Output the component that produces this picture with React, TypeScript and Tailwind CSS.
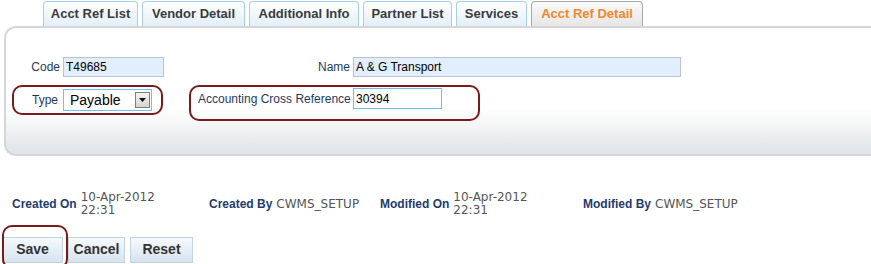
import React from "react";

const tabs = [
  { label: "Acct Ref List", w: 95 },
  { label: "Vendor Detail", w: 103 },
  { label: "Additional Info", w: 110 },
  { label: "Partner List", w: 89 },
  { label: "Services", w: 71 },
  { label: "Acct Ref Detail", w: 112, active: true },
];

function MetaItem({ label, value, width }: { label: string; value: React.ReactNode; width: string }) {
  return (
    <div className={`flex items-center gap-[4px] ${width}`}>
      <span className="whitespace-nowrap text-[12px] font-bold text-[#1f3b6e] font-['Liberation_Sans',Arial,sans-serif]">{label}</span>
      <span className="whitespace-nowrap text-[12px] leading-[13px] text-[#555] font-['DejaVu_Sans',Verdana,sans-serif]">{value}</span>
    </div>
  );
}

export default function App() {
  return (
    <div className="w-[871px] h-[264px] bg-white overflow-hidden font-['Liberation_Sans',Arial,sans-serif]">
      {/* Tabs */}
      <div className="flex items-end gap-[4px] pl-[43px] pt-[1px] h-[26px]">
        {tabs.map((t) => (
          <div
            key={t.label}
            style={{ width: t.w }}
            className={
              t.active
                ? "h-[25px] rounded-t-[4px] border border-b-0 border-[#a8a8a8] bg-gradient-to-b from-[#fafafa] to-[#e6e6e6] flex items-center justify-center text-[13px] font-bold text-[#f0892a]"
                : "h-[25px] rounded-t-[4px] border border-b-0 border-[#a6cfea] bg-gradient-to-b from-white to-[#e2eff9] flex items-center justify-center text-[13px] font-bold text-[#3b3b3b]"
            }
          >
            {t.label}
          </div>
        ))}
      </div>

      {/* Panel */}
      <div className="ml-[4px] h-[130px] border-2 border-r-0 border-[#d6d6d6] rounded-l-[12px] bg-[linear-gradient(to_bottom,#ffffff_0%,#ffffff_64%,#f6f7f8_74%,#dfe3e7_100%)]">
        <div className="pt-[29px]">
          {/* Row 1 */}
          <div className="flex items-center h-[20px]">
            <span className="w-[54px] text-right text-[12px] text-[#1f3b5c]">Code</span>
            <div className="ml-[3px] w-[101px] h-[20px] bg-[#e2eefb] border border-[#b7c5d2] text-[12px] text-black px-[2px] flex items-center">
              T49685
            </div>
            <span className="w-[186px] text-right text-[12px] text-[#1f3b5c]">Name</span>
            <div className="ml-[3px] w-[328px] h-[20px] bg-[#e2eefb] border border-[#b7c5d2] text-[12px] text-black px-[2px] flex items-center">
              A &amp; G Transport
            </div>
          </div>

          {/* Row 2 */}
          <div className="flex items-start mt-[8px]">
            <div className="ml-[6px] w-[151px] h-[30px] border-2 border-[#7b1a1a] rounded-[10px] flex items-center justify-end pr-[9px] gap-[5px]">
              <span className="text-[12px] text-[#1f3b5c]">Type</span>
              <div className="w-[89px] h-[22px] border border-[#74c0ea] bg-white flex items-center justify-between pl-[6px] pr-[1px]">
                <span className="text-[14px] text-black">Payable</span>
                <div className="w-[15px] h-[16px] border border-[#7e7e7e] bg-gradient-to-b from-[#f4f4f4] to-[#d4d4d4] flex items-center justify-center">
                  <svg width="7" height="4" viewBox="0 0 7 4">
                    <path d="M0 0 H7 L3.5 4 Z" fill="#111" />
                  </svg>
                </div>
              </div>
            </div>
            <div className="ml-[26px] w-[291px] h-[36px] border-2 border-[#7b1a1a] rounded-[10px] flex items-start pt-[1px] pl-[7px]">
              <div className="flex items-center h-[21px]">
                <span className="w-[155px] shrink-0 whitespace-nowrap text-[12px] text-[#1f3b5c]">Accounting Cross Reference</span>
                <div className="w-[89px] h-[21px] shrink-0 border border-[#6cbfea] bg-white text-[12px] text-black px-[2px] flex items-center">
                  30394
                </div>
              </div>
            </div>
          </div>
        </div>
      </div>

      {/* Meta row */}
      <div className="flex items-center mt-[35px] h-[26px] pl-[12px]">
        <MetaItem label="Created On" width="w-[197px]" value={<>10-Apr-2012<br />22:31</>} />
        <MetaItem label="Created By" width="w-[171px]" value="CWMS_SETUP" />
        <MetaItem label="Modified On" width="w-[203px]" value={<>10-Apr-2012<br />22:31</>} />
        <MetaItem label="Modified By" width="w-[200px]" value="CWMS_SETUP" />
      </div>

      {/* Buttons */}
      <div className="relative mt-[20px] flex gap-[5px] pl-[2px]">
        {[
          { l: "Save", w: "w-[61px]" },
          { l: "Cancel", w: "w-[57px]" },
          { l: "Reset", w: "w-[63px]" },
        ].map((b) => (
          <div
            key={b.l}
            className={`${b.w} h-[26px] border border-[#c3d3e0] bg-gradient-to-b from-[#f5f9fc] to-[#d6e4ef] flex items-end justify-center pb-[2px] text-[14px] font-bold text-[#333]`}
          >
            {b.l}
          </div>
        ))}
        <div className="absolute left-[2px] top-[-12px] w-[66px] h-[44px] border-2 border-[#7b1a1a] rounded-[10px] pointer-events-none" />
      </div>
    </div>
  );
}
